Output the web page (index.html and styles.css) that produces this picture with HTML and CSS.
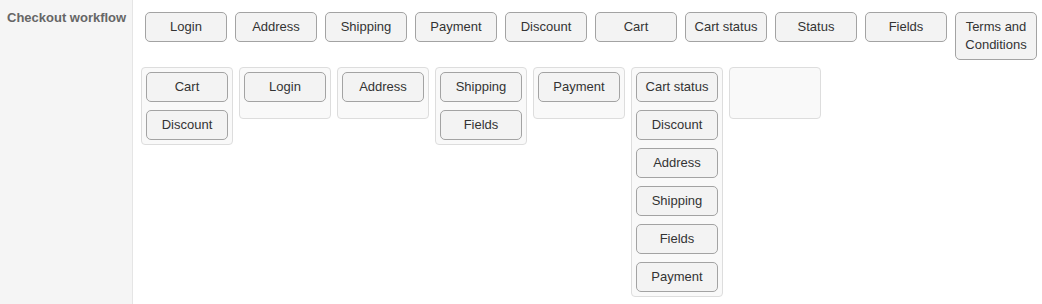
FILE: index.html
```html
<!DOCTYPE html>
<html lang="en">
<head>
  <meta charset="UTF-8">
  <title>Checkout workflow</title>
  <link rel="stylesheet" href="styles.css">
</head>
<body>
  <div class="setting-row">
    <div class="label-col">Checkout workflow</div>
    <div class="field-col">
      <div class="palette">
        <div class="step">Login</div>
        <div class="step">Address</div>
        <div class="step">Shipping</div>
        <div class="step">Payment</div>
        <div class="step">Discount</div>
        <div class="step">Cart</div>
        <div class="step">Cart status</div>
        <div class="step">Status</div>
        <div class="step">Fields</div>
        <div class="step">Terms and Conditions</div>
      </div>

      <div class="pages">
        <div class="page">
          <div class="step">Cart</div>
          <div class="step">Discount</div>
        </div>
        <div class="page">
          <div class="step">Login</div>
        </div>
        <div class="page">
          <div class="step">Address</div>
        </div>
        <div class="page">
          <div class="step">Shipping</div>
          <div class="step">Fields</div>
        </div>
        <div class="page">
          <div class="step">Payment</div>
        </div>
        <div class="page">
          <div class="step">Cart status</div>
          <div class="step">Discount</div>
          <div class="step">Address</div>
          <div class="step">Shipping</div>
          <div class="step">Fields</div>
          <div class="step">Payment</div>
        </div>
        <div class="page"></div>
      </div>
    </div>
  </div>
</body>
</html>
```

FILE: styles.css
```css
body {
  margin: 0;
  font-family: 'Liberation Sans', Arial, sans-serif;
  font-size: 13px;
  color: #333;
  background: #fff;
}

.setting-row {
  display: flex;
  min-height: 304px;
}

.label-col {
  flex: none;
  width: 133px;
  box-sizing: border-box;
  padding: 10px 7px;
  background: #f5f5f5;
  border-right: 1px solid #e5e5e5;
  font-weight: bold;
  color: #666;
  line-height: 15px;
  white-space: nowrap;
}

.field-col {
  padding: 12px 8px 0 8px;
}

.palette {
  display: flex;
  align-items: flex-start;
  gap: 8px;
  padding-left: 4px;
}

.step {
  flex: none;
  width: 82px;
  box-sizing: border-box;
  padding: 5px 3px;
  line-height: 18px;
  text-align: center;
  background: #f3f3f3;
  border: 1px solid #a3a3a3;
  border-radius: 5px;
  cursor: move;
}

.pages {
  display: flex;
  align-items: flex-start;
  gap: 6px;
  margin-top: 7px;
}

.page {
  flex: none;
  width: 92px;
  min-height: 52px;
  box-sizing: border-box;
  padding: 4px;
  display: flex;
  flex-direction: column;
  gap: 8px;
  background: #f9f9f9;
  border: 1px solid #ddd;
  border-radius: 4px;
}
```
